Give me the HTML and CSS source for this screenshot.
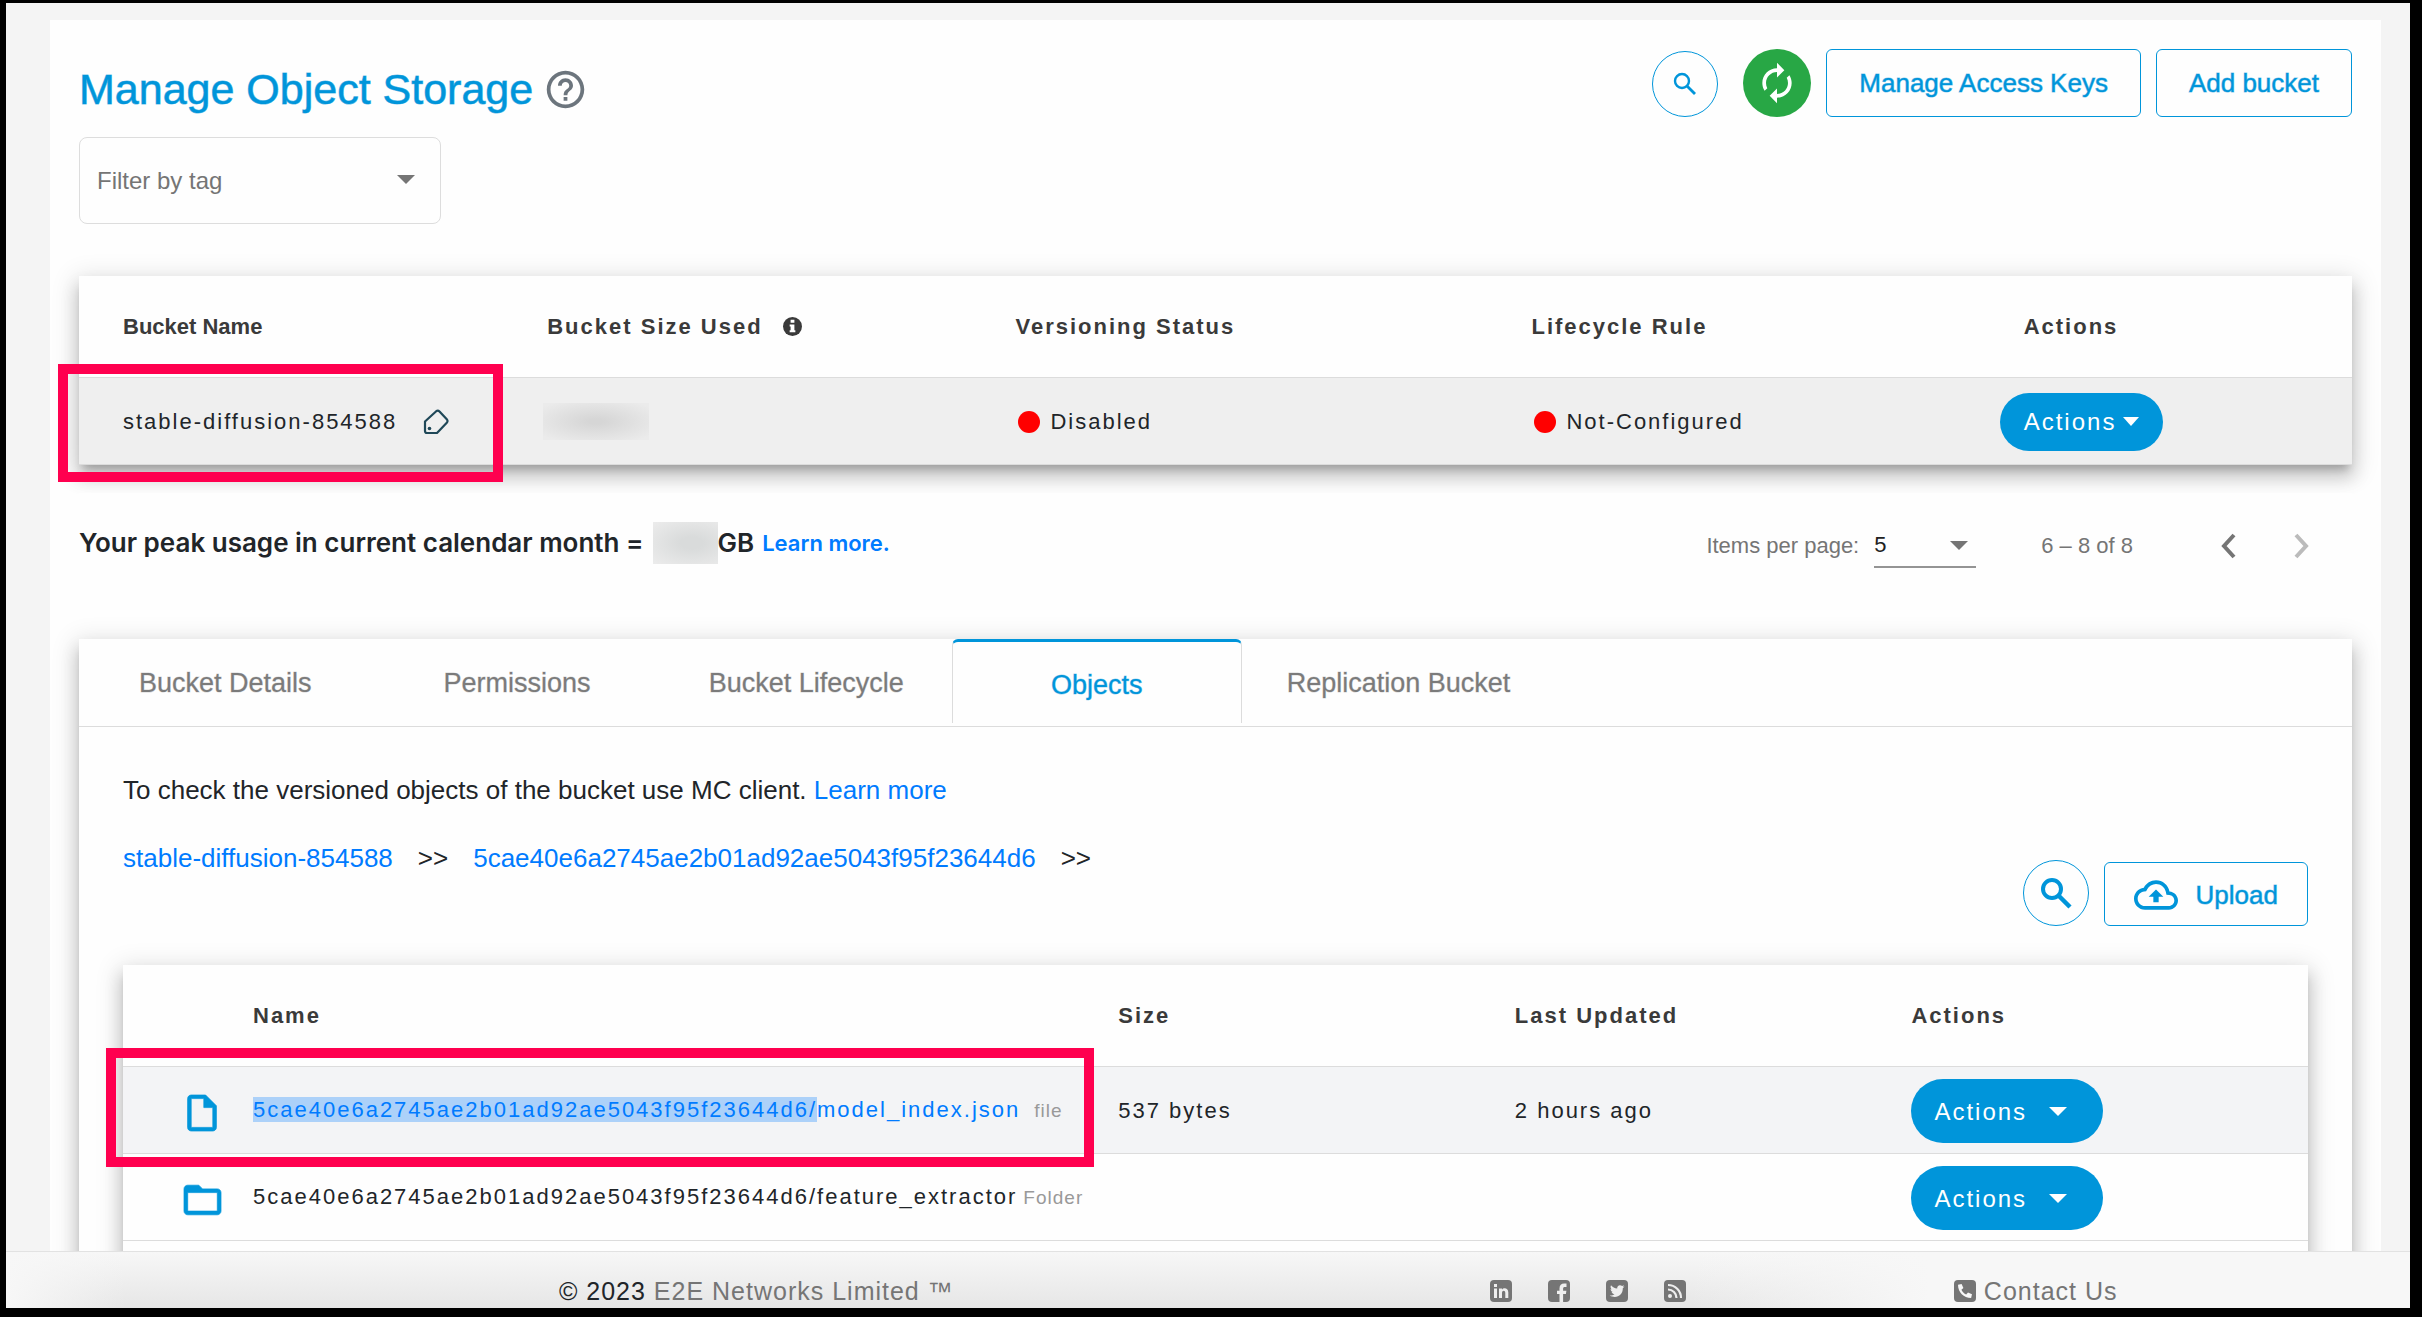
FILE: index.html
```html
<!DOCTYPE html>
<html lang="en">
<head>
<meta charset="utf-8">
<title>Manage Object Storage</title>
<link rel="stylesheet" href="styles.css">
</head>
<body>
<div class="app">
  <main class="main">
    <div class="panel">
      <header class="page-head">
        <h1 class="title">Manage Object Storage
          <svg class="help" viewBox="0 0 24 24" aria-hidden="true"><path fill="currentColor" d="M11 18h2v-2h-2v2zm1-16C6.480 2 2 6.480 2 12s4.480 10 10 10 10-4.480 10-10S17.520 2 12 2zm0 18c-4.410 0-8-3.590-8-8s3.590-8 8-8 8 3.590 8 8-3.590 8-8 8zm0-14c-2.210 0-4 1.790-4 4h2c0-1.100.9-2 2-2s2 .9 2 2c0 2-3 1.750-3 5h2c0-2.250 3-2.500 3-5 0-2.210-1.790-4-4-4z"/></svg>
        </h1>
        <div class="head-actions">
          <button class="round round-search" aria-label="Search"><svg class="icon-small" viewBox="0 0 24 24"><circle cx="9" cy="9" r="7" fill="none" stroke="currentColor" stroke-width="2.400"/><path d="M14 14l8 8" stroke="currentColor" stroke-width="2.800"/></svg></button>
          <button class="round round-refresh" aria-label="Refresh"><svg class="icon-refresh" viewBox="0 0 24 24"><path fill="currentColor" d="M12 6v3l4-4-4-4v3c-4.420 0-8 3.580-8 8 0 1.570.46 3.030 1.240 4.260L6.700 14.800c-.45-.83-.7-1.790-.7-2.800 0-3.310 2.690-6 6-6zm6.760 1.740L17.300 9.200c.44.84.7 1.790.7 2.800 0 3.310-2.690 6-6 6v-3l-4 4 4 4v-3c4.420 0 8-3.580 8-8 0-1.570-.46-3.030-1.240-4.260z"/></svg></button>
          <button class="btn btn-tall">Manage Access Keys</button>
          <button class="btn btn-tall">Add bucket</button>
        </div>
      </header>

      <div class="filter">
        <select class="filter-select" aria-label="Filter by tag"><option>Filter by tag</option></select>
        <svg class="caret filter-caret" viewBox="0 0 18 9"><path fill="currentColor" d="M0 0h18l-9 9z"/></svg>
      </div>

      <section class="card buckets">
        <table class="grid">
          <colgroup><col class="b-name"><col class="b-size"><col class="b-version"><col class="b-rule"><col></colgroup>
          <thead>
            <tr><th class="plain">Bucket Name</th><th>Bucket Size Used
              <svg class="info" viewBox="0 0 20 20"><circle cx="10" cy="10" r="10" fill="currentColor"/><path fill="#fff" d="M8 3h4v3H8zM7 8h5v6h1v2H7v-2h1v-4H7z"/></svg></th><th>Versioning Status</th><th>Lifecycle Rule</th><th class="action-head">Actions</th></tr>
          </thead>
          <tbody>
            <tr class="picked">
              <td class="marked"><span class="inline">stable-diffusion-854588
                <svg class="tag" viewBox="0 0 26 26"><path fill="none" stroke="#1f4858" stroke-width="2.200" stroke-linejoin="round" d="M2 12.500L13.500 2Q15 1 16.500 2.500L24 10.500Q25 12 24 13.500L14 24H4Q2 24 2 22z"/><circle cx="6.500" cy="19.500" r="1.800" fill="#1f4858"/></svg></span>
                <span class="mark mark-bucket"></span></td>
              <td><span class="redacted redacted-size"></span></td>
              <td><span class="inline"><i class="dot"></i>Disabled</span></td>
              <td><span class="inline"><i class="dot"></i>Not-Configured</span></td>
              <td><button class="pill pill-compact">Actions<svg class="caret-small" viewBox="0 0 16 9"><path fill="currentColor" d="M0 0h16l-8 9z"/></svg></button></td>
            </tr>
          </tbody>
        </table>
      </section>

      <div class="summary">
        <p class="usage"><span>Your peak usage in current calendar month =</span><span class="redacted redacted-usage"></span><span class="unit">GB</span><a class="usage-link" href="#">Learn more.</a></p>
        <div class="pager">
          <label for="per-page">Items per page:</label>
          <div class="per-page">
            <select id="per-page" class="per-page-select"><option>5</option></select>
            <svg class="caret per-page-caret" viewBox="0 0 18 9"><path fill="currentColor" d="M0 0h18l-9 9z"/></svg>
          </div>
          <span class="range">6 – 8 of 8</span>
          <button class="step" aria-label="Previous page"><svg viewBox="0 0 16 26"><path fill="none" stroke="currentColor" stroke-width="4" d="M14 2L4 13l10 11"/></svg></button>
          <button class="step" aria-label="Next page" disabled><svg viewBox="0 0 16 26"><path fill="none" stroke="currentColor" stroke-width="4" d="M2 2l10 11L2 24"/></svg></button>
        </div>
      </div>

      <section class="card details">
        <div class="tabs" role="tablist">
          <button class="tab tab-details" role="tab">Bucket Details</button>
          <button class="tab tab-permissions" role="tab">Permissions</button>
          <button class="tab tab-lifecycle" role="tab">Bucket Lifecycle</button>
          <button class="tab active" role="tab" aria-selected="true">Objects</button>
          <button class="tab tab-replication" role="tab">Replication Bucket</button>
        </div>
        <div class="tab-body">
          <p class="hint">To check the versioned objects of the bucket use MC client. <a href="#">Learn more</a></p>
          <nav class="crumbs">
            <a href="#">stable-diffusion-854588</a><span>&gt;&gt;</span><a href="#">5cae40e6a2745ae2b01ad92ae5043f95f23644d6</a><span>&gt;&gt;</span>
          </nav>
          <div class="tools">
            <button class="round round-search" aria-label="Search objects"><svg class="icon-search" viewBox="0 0 32 32"><circle cx="12" cy="12" r="9" fill="none" stroke="currentColor" stroke-width="4"/><path d="M18 18l12 12" stroke="currentColor" stroke-width="4.500"/></svg></button>
            <button class="btn btn-upload"><svg class="cloud" viewBox="0 4 24 16"><path fill="currentColor" d="M19.350 10.040C18.670 6.590 15.640 4 12 4 9.110 4 6.600 5.640 5.350 8.040 2.340 8.360 0 10.910 0 14c0 3.310 2.690 6 6 6h13c2.760 0 5-2.240 5-5 0-2.640-2.050-4.780-4.650-4.960zM19 18H6c-2.210 0-4-1.790-4-4 0-2.050 1.530-3.760 3.560-3.970l1.070-.11.5-.95C8.080 7.140 9.940 6 12 6c2.620 0 4.880 1.860 5.390 4.430l.3 1.500 1.530.11c1.560.1 2.780 1.410 2.780 2.960 0 1.650-1.350 3-3 3zM8 13h2.550v3h2.900v-3H16l-4-4z"/></svg>Upload</button>
          </div>

          <div class="card objects">
            <table class="grid">
              <colgroup><col class="o-icon"><col class="o-name"><col class="o-size"><col class="o-updated"><col></colgroup>
              <thead>
                <tr><th></th><th>Name</th><th>Size</th><th>Last Updated</th><th>Actions</th></tr>
              </thead>
              <tbody>
                <tr class="hovered">
                  <td class="icon-cell"><svg class="file" viewBox="4 2 16 20"><path fill="currentColor" stroke="currentColor" stroke-width=".4" d="M14 2H6c-1.100 0-1.990.9-1.990 2L4 20c0 1.100.89 2 1.990 2H18c1.100 0 2-.9 2-2V8l-6-6zM6 20V4h7v5h5v11H6z"/></svg></td>
                  <td class="marked"><a class="path" href="#"><span class="selected">5cae40e6a2745ae2b01ad92ae5043f95f23644d6/</span>model_index.json</a><small class="kind kind-file">file</small><span class="mark mark-object"></span></td>
                  <td>537 bytes</td>
                  <td>2 hours ago</td>
                  <td><button class="pill">Actions<svg class="caret" viewBox="0 0 18 9"><path fill="currentColor" d="M0 0h18l-9 9z"/></svg></button></td>
                </tr>
                <tr>
                  <td class="icon-cell"><svg class="folder" viewBox="2 4 20 16"><path fill="currentColor" stroke="currentColor" stroke-width=".4" d="M10 4H4c-1.100 0-1.990.9-1.990 2L2 18c0 1.100.9 2 2 2h16c1.100 0 2-.9 2-2V8c0-1.100-.9-2-2-2h-8l-2-2zM20 18H4V8h16v10z"/></svg></td>
                  <td class="name">5cae40e6a2745ae2b01ad92ae5043f95f23644d6/feature_extractor<small class="kind">Folder</small></td>
                  <td></td>
                  <td></td>
                  <td><button class="pill">Actions<svg class="caret" viewBox="0 0 18 9"><path fill="currentColor" d="M0 0h18l-9 9z"/></svg></button></td>
                </tr>
                <tr><td></td><td></td><td></td><td></td><td></td></tr>
              </tbody>
            </table>
          </div>
        </div>
      </section>
    </div>
  </main>

  <footer class="footer">
    <div class="copyright">© 2023 <a href="#">E2E Networks Limited ™</a></div>
    <div class="social">
      <a href="#" aria-label="LinkedIn"><svg viewBox="0 0 22 22"><rect width="22" height="22" rx="4" fill="currentColor"/><path fill="#eee" d="M4 8.500h3V18H4zM4 4h3v3H4zM9 8.500h3v1.300c1.600-2.500 6.300-1.800 6.300 2.700V18h-3v-5c0-3-3.300-2.700-3.300 0v5H9z"/></svg></a>
      <a href="#" aria-label="Facebook"><svg viewBox="0 0 22 22"><rect width="22" height="22" rx="4" fill="currentColor"/><path fill="#eee" d="M11.500 22v-8H9v-3.300h2.500V8.500c0-3.300 1.800-4.900 4.700-4.900h2.300v3.300H17c-1.500 0-1.900.6-1.900 1.900v1.900h3.300l-.5 3.300h-2.800v8z"/></svg></a>
      <a href="#" aria-label="Twitter"><svg viewBox="0 0 22 22"><rect width="22" height="22" rx="4" fill="currentColor"/><path fill="#eee" d="M18.500 6.500l-1.700.5 1.300-1.700-2 .8c-2-2-5.300-.5-4.900 2.300-2.500 0-4.700-1.300-6.200-3.200-.9 1.500-.4 3.300 1 4.200l-1.400-.4c0 1.600 1 2.700 2.400 3.100H5.600c.4 1.300 1.600 2 2.900 2.100-1.300 1-3 1.500-4.800 1.300 6.500 3.800 13.400-.4 13.100-7.300z"/></svg></a>
      <a href="#" aria-label="RSS feed"><svg viewBox="0 0 22 22"><rect width="22" height="22" rx="4" fill="currentColor"/><circle cx="6" cy="16" r="2" fill="#eee"/><path fill="none" stroke="#eee" stroke-width="2.200" d="M4 9.500a8.500 8.500 0 0 1 8.500 8.500M4 5a13 13 0 0 1 13 13"/></svg></a>
    </div>
    <a class="contact" href="#"><svg viewBox="0 0 22 22"><rect width="22" height="22" rx="4" fill="currentColor"/><path fill="#f7f7f7" d="M4 4.800L7.600 4l1.800 4-2 1.700c1 2.200 2.600 3.800 4.800 4.900l1.800-2.100 4 1.800-.9 3.700C9.800 18 4 12.200 4 4.800z"/></svg>Contact Us</a>
  </footer>
</div>
</body>
</html>
```
FILE: styles.css
```css
* { box-sizing: border-box; }

body {
  margin: 0;
  height: 100vh;
  padding: 3px 12px 9px 6px;
  background: #000;
  color: #212529;
  font-family: "Liberation Sans", Arial, sans-serif;
  font-size: 26px;
  line-height: 32px;
}

a { color: #007bff; text-decoration: none; }
p { margin: 0; }
svg { display: block; flex: none; }

button, select {
  margin: 0;
  font: inherit;
  color: inherit;
  background: none;
  border: 0;
}

.app {
  height: 100%;
  display: flex;
  flex-direction: column;
  overflow: hidden;
  background: #f4f4f4;
}

.main {
  flex: 1;
  min-height: 0;
  overflow: hidden;
  padding: 17px 29px 0 44px;
}

.panel { background: #fefefe; padding: 29px 29px 40px; }

/* Page header */
.page-head {
  display: flex;
  justify-content: space-between;
  align-items: center;
}

.title {
  margin: 12px 0 0;
  display: flex;
  align-items: center;
  gap: 10px;
  color: #0095da;
  font-size: 43px;
  line-height: 56px;
  font-weight: 400;
  -webkit-text-stroke: 1px rgba(0, 149, 218, .6);
}

.help { width: 45px; height: 45px; color: #6c757d; }

.head-actions { display: flex; align-items: flex-end; }
.head-actions .btn { margin-left: 15px; }

.round {
  display: flex;
  align-items: center;
  justify-content: center;
  border-radius: 50%;
  padding: 0;
}

.round-search { width: 66px; height: 66px; border: 1px solid #0095da; color: #0095da; }
.round-refresh { width: 68px; height: 68px; margin-left: 25px; background: #28a745; color: #fff; }
.icon-small { width: 24px; height: 24px; }
.icon-refresh { width: 44px; height: 44px; }
.icon-search { width: 32px; height: 32px; }

.btn {
  display: flex;
  align-items: center;
  gap: 18px;
  height: 64px;
  padding: 0 32px;
  border: 1px solid #0095da;
  border-radius: 6px;
  color: #0095da;
  -webkit-text-stroke: 1px rgba(0, 149, 218, .5);
}

.btn-tall { height: 68px; }
.btn-upload { padding: 2px 29px 0; }
.cloud { width: 44px; height: 30px; }

/* Tag filter */
.filter { position: relative; width: 362px; margin-top: 20px; color: #757575; }

.filter-select {
  appearance: none;
  width: 100%;
  height: 87px;
  padding: 0 17px;
  border: 1px solid #ddd;
  border-radius: 8px;
  font-size: 24px;
}

.caret { width: 18px; height: 9px; }
.caret-small { width: 16px; height: 9px; }
.filter-caret { position: absolute; right: 26px; top: 38px; }

/* Cards and tables */
.card {
  background: #fefefe;
  box-shadow: 0 8px 8px -4px rgba(0, 0, 0, .2), 0 12px 16px 2px rgba(0, 0, 0, .14), 0 5px 24px 4px rgba(0, 0, 0, .12);
}

.buckets { margin-top: 52px; }

.grid {
  width: 100%;
  table-layout: fixed;
  border-collapse: separate;
  border-spacing: 0;
  font-size: 22px;
  letter-spacing: 2px;
}

.grid th, .grid td {
  padding: 1px 0 0;
  text-align: left;
  white-space: nowrap;
  border-bottom: 1px solid #dcdcdc;
}

.grid th { height: 102px; color: #3a3a3a; font-weight: 700; }
.grid th.plain { letter-spacing: 0; }
.grid td { height: 87px; }
.grid td.marked { position: relative; }

.buckets th:first-child, .buckets td:first-child { padding-left: 44px; }
.buckets .action-head { padding-left: 24px; }
.b-name { width: 20.600%; }
.b-size { width: 20.600%; }
.b-version { width: 22.700%; }
.b-rule { width: 20.600%; }

.picked { background: #efefef; }
.hovered { background: #f3f4f6; }

.inline { display: flex; align-items: center; }
.info { display: inline-block; width: 19px; height: 19px; margin-left: 12px; vertical-align: -2px; }
.tag { width: 26px; height: 26px; margin-left: 26px; }
.dot { width: 22px; height: 22px; margin: 0 10px 0 3px; border-radius: 50%; background: #f00; }

/* Red call-out frames drawn over the table rows */
.mark { position: absolute; border: 10px solid #ff004f; pointer-events: none; }
.mark-bucket { left: -21px; right: 44px; top: -14px; bottom: -18px; }
.mark-object { left: -147px; right: 24px; top: -19px; bottom: -14px; }

/* Hidden figures */
.redacted { display: block; }
.redacted-size {
  width: 106px;
  height: 37px;
  margin-left: -4px;
  background: radial-gradient(ellipse at 50% 50%, #d6d6d6 10%, #ebebeb 90%);
}
.redacted-usage {
  width: 65px;
  height: 42px;
  margin-left: 9px;
  background: radial-gradient(ellipse at 60% 50%, #d9dbdb 20%, #ececec 100%);
}

.pill {
  display: flex;
  align-items: center;
  gap: 22px;
  height: 64px;
  padding: 2px 36px 0 23px;
  border-radius: 32px;
  background: #0095da;
  color: #fff;
  font-size: 24px;
  letter-spacing: 2px;
}

.pill-compact { height: 58px; gap: 7px; padding: 0 24px; }

/* Usage line and paginator */
.summary {
  position: relative;
  display: flex;
  justify-content: space-between;
  margin-top: 28px;
  background: #fefefe;
  height: 146px;
  padding-top: 29px;
}

.usage {
  display: flex;
  align-items: center;
  height: 42px;
  font-family: Inter, "Liberation Sans", sans-serif;
  font-size: 26px;
  font-weight: 600;
}

.usage-link { margin-left: 8px; font-size: 22px; }

.pager {
  display: flex;
  align-items: center;
  height: 48px;
  padding-right: 42px;
  color: #757575;
  font-size: 22px;
}

.per-page { position: relative; width: 102px; margin-left: 15px; }

.per-page-select {
  appearance: none;
  display: block;
  width: 100%;
  height: 44px;
  padding: 0;
  border-bottom: 2px solid #949494;
  border-radius: 0;
  color: #212121;
}

.per-page-caret { position: absolute; right: 8px; top: 17px; }
.range { margin: 0 87px 0 65px; }
.step { padding: 0; margin-right: 58px; color: #757575; }
.step svg { width: 16px; height: 26px; }
.step:disabled { margin-right: 0; color: #bbb; }

/* Tabs */
.details { position: relative; }
.tabs { display: flex; height: 88px; border-bottom: 1px solid #dcdcdc; }

.tab {
  height: 84px;
  padding: 4px 0 0;
  color: #7b7b7b;
  border: 0 solid transparent;
  font-size: 27px;
  -webkit-text-stroke: 1px rgba(123, 123, 123, .3);
}

.tab-details { margin: 0 132px 0 60px; }
.tab-permissions { margin-right: 118px; }
.tab-lifecycle { margin-right: 48px; }
.tab-replication { margin-left: 45px; }

.tab.active {
  width: 290px;
  border: 1px solid #dcdcdc;
  border-top: 3px solid #0095da;
  border-bottom: 0;
  border-radius: 6px 6px 0 0;
  color: #0095da;
  -webkit-text-stroke-color: rgba(0, 149, 218, .4);
}

.tab-body { padding: 47px 44px 60px; }
.crumbs { display: flex; gap: 25px; margin-top: 36px; }

.tools {
  display: flex;
  justify-content: flex-end;
  align-items: flex-end;
  gap: 15px;
  margin-top: -14px;
}

.objects { margin-top: 39px; }
.o-icon { width: 130px; }
.o-name { width: 39.600%; }
.o-size { width: 18.150%; }
.o-updated { width: 18.150%; }

.icon-cell { color: #0095da; }
.icon-cell svg { overflow: visible; }
.file { width: 30px; height: 36px; margin: 4px 0 0 64px; }
.folder { width: 37px; height: 30px; margin: 4px 0 0 61px; }
.name { color: #212529; }
.selected { background: #acd1f9; }
.kind { color: #999; font-size: 19px; letter-spacing: 1px; margin-left: 6px; }
.kind-file { margin-left: 14px; }

/* Footer */
.footer {
  display: flex;
  align-items: center;
  height: 57px;
  padding: 22px 12% 0 23%;
  border-top: 1px solid #e2e2e2;
  background:
    linear-gradient(to right, #f7f7f7 0, rgba(247, 247, 247, 0) 5%, rgba(247, 247, 247, 0) 70%, #f7f7f7 80%),
    linear-gradient(#f7f7f7, #e6e6e6);
  font-size: 25px;
  letter-spacing: 1px;
}

.footer a { color: #757575; }
.footer svg { width: 22px; height: 22px; }
.social { display: flex; gap: 36px; margin-left: auto; }
.contact { display: flex; align-items: center; gap: 8px; margin: 0 4px 0 268px; }
```
